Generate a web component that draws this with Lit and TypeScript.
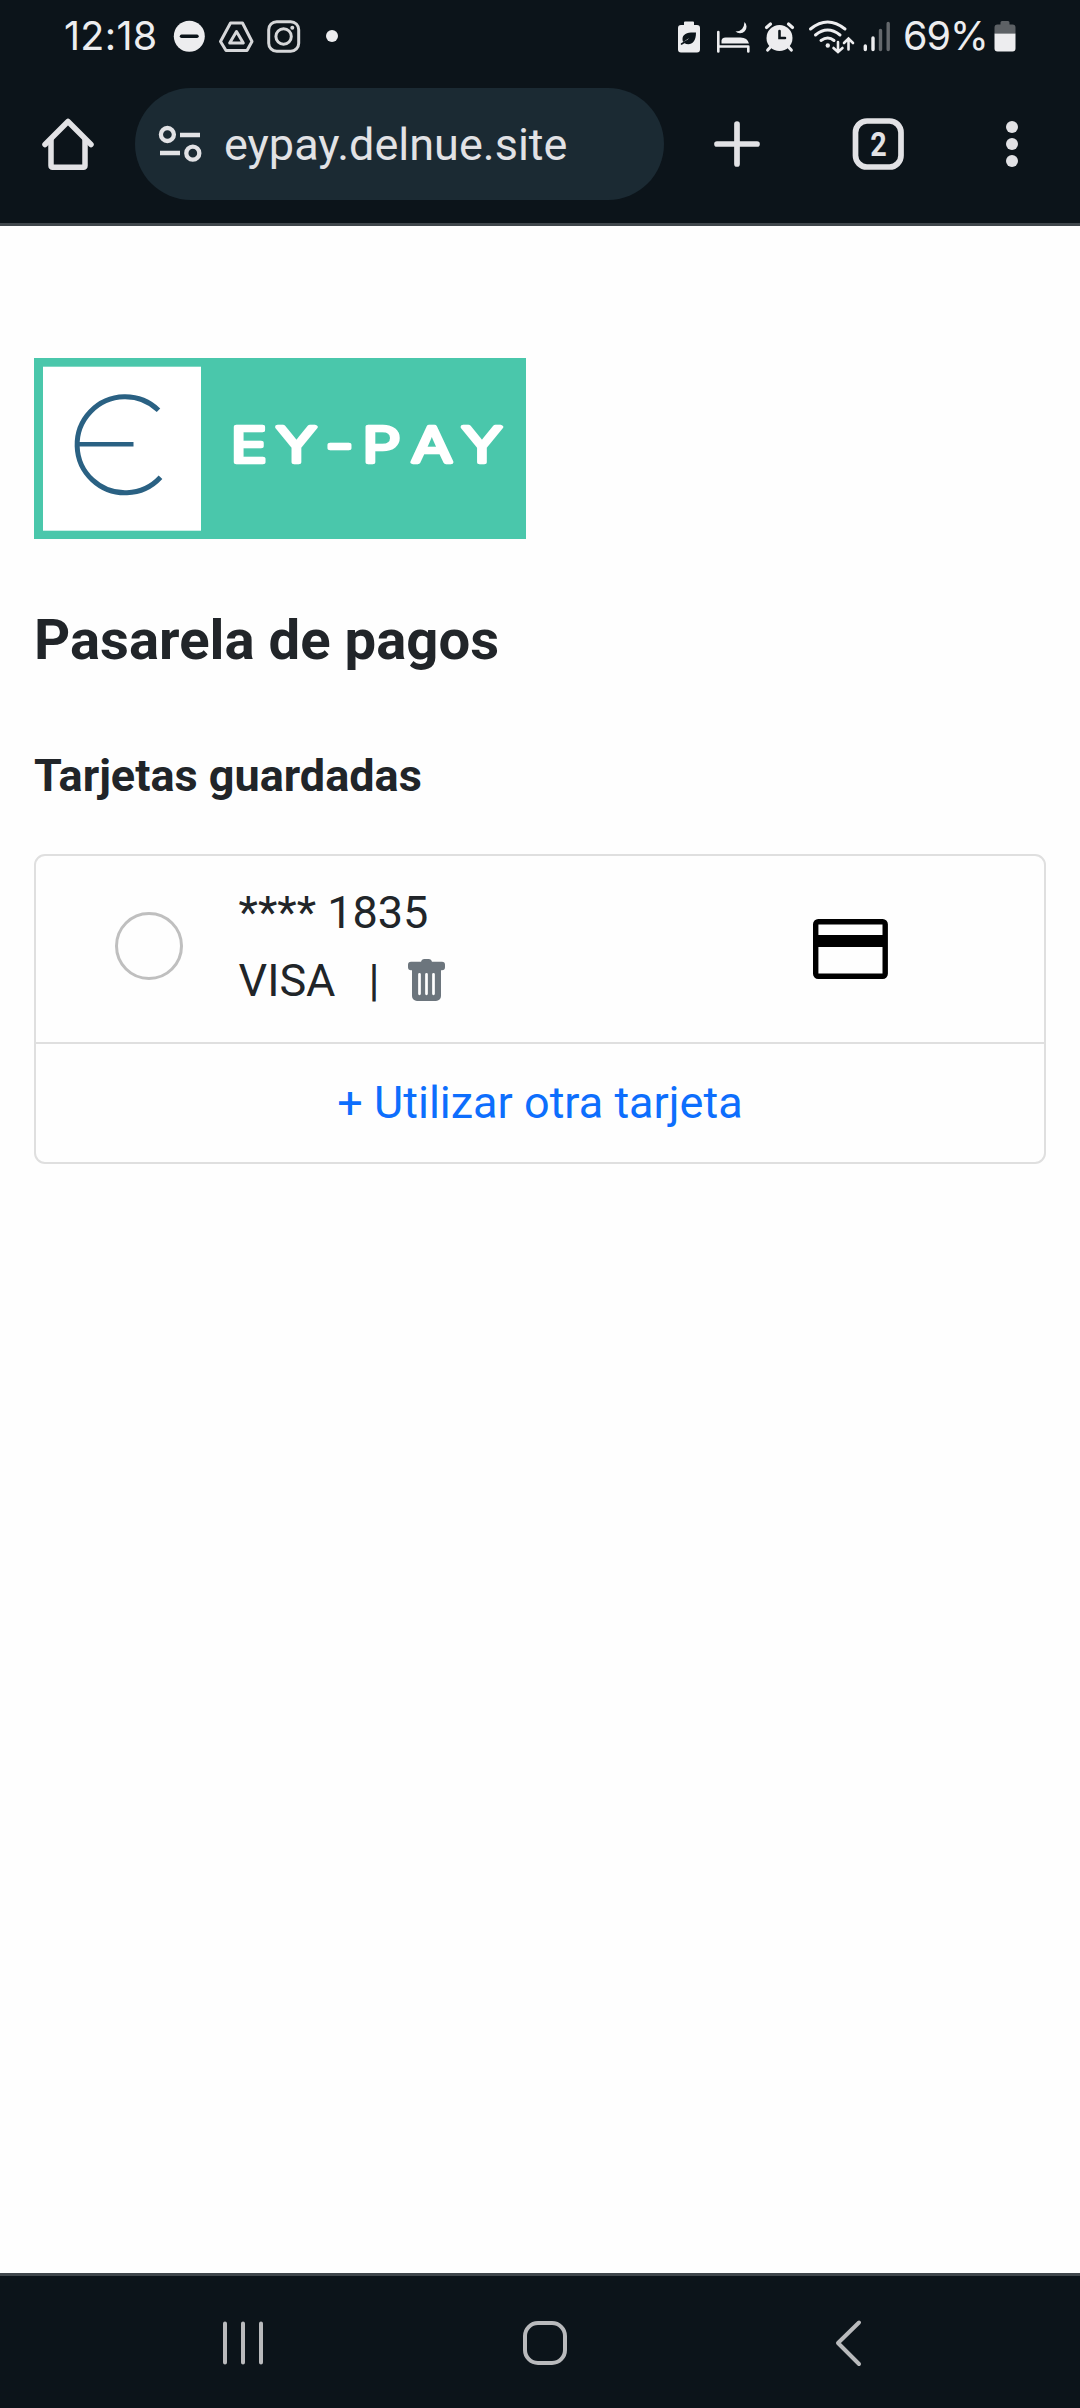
import { LitElement, html, css } from "lit";
import { customElement, property } from "lit/decorators.js";

@customElement("status-bar")
class StatusBar extends LitElement {
  static styles = css`
    :host {
      display: flex;
      justify-content: space-between;
      height: 75px;
      padding: 0 64px 0 64px;
      box-sizing: border-box;
      color: #ededef;
      font: 400 39.5px/72px Inter, "Liberation Sans", sans-serif;
    }
    .group { display: flex; }
    svg { display: block; flex: none; }
    .clock { width: 109px; letter-spacing: 0.3px; white-space: nowrap; }
    .level { width: 91px; margin-left: -2px; letter-spacing: -1px; white-space: nowrap; }
  `;
  render() {
    return html`
      <div class="group">
        <span class="clock">12:18</span>
        <svg width="165" height="75" viewBox="173 0 165 75" fill="none">
          <circle cx="189.3" cy="36.3" r="15.5" fill="#ededef" />
          <path d="M181.5 36.3h15.5" stroke="#0c141a" stroke-width="3.4" stroke-linecap="round" />
          <g stroke="#d6d7d9" stroke-width="3" stroke-linejoin="round">
            <path d="M230.5 23h12l9.500 18.500-5 9h-21l-5.500-9z" />
            <path d="M236.500 31.500l6.800 11.500h-13.600z" />
            <rect x="268.700" y="21.700" width="30" height="29.500" rx="8" />
            <circle cx="283.600" cy="36.500" r="7.700" />
          </g>
          <circle cx="292.300" cy="27.800" r="2" fill="#d6d7d9" />
          <circle cx="332" cy="36" r="6" fill="#ededef" />
        </svg>
      </div>
      <div class="group">
        <svg width="230" height="75" viewBox="675 0 230 75" fill="none" stroke-linecap="round">
          <path d="M685 21.500h8a1 1 0 0 1 1 1v2.500h3a3 3 0 0 1 3 3v21.500a3 3 0 0 1-3 3h-16a3 3 0 0 1-3-3V28a3 3 0 0 1 3-3h3v-2.500a1 1 0 0 1 1-1z" fill="#ededef" />
          <path d="M696 32.500c-8-.5-13.500 1-13.500 6.500 0 2 .7 3 .7 3l6-4-5 5c5 3 11.800 1 11.800-10.500z" fill="#0c141a" />
          <path d="M681.500 44l5-3" stroke="#0c141a" stroke-width="1.500" />
          <g stroke="#ededef" stroke-width="2.600">
            <path d="M718.300 32v19.500M718.300 46.500h30M748.300 46.500v5" />
          </g>
          <path d="M721.500 43.500v-3q.5-3 4-3h15q7 0 8.500 6z" fill="#ededef" />
          <path d="M744.500 22a6.300 6.300 0 1 1-9 9.500q8.500 0 9-9.500z" fill="#ededef" />
          <circle cx="779.500" cy="38" r="13" fill="#ededef" />
          <path d="M766.500 27.500l4-3.500M792.500 27.500l-4-3.500M770.500 47l-2.800 3M788.500 47l2.800 3" stroke="#ededef" stroke-width="3.200" />
          <path d="M779.500 31v7h5.500" stroke="#0c141a" stroke-width="2.600" />
          <g stroke="#ededef" stroke-width="3">
            <path d="M810.500 29q17-14 34.500 0" />
            <path d="M815.500 35q12-10 24.500 0" />
            <path d="M821 40.500q7-5 13 0" />
            <path d="M838 42v9M833.500 48l4.500 4 4.500-4" stroke-width="2.600" />
            <path d="M848.500 49.500V39M844 43l4.500-4.500 4.500 4.500" stroke-width="2.600" />
          </g>
          <circle cx="827.800" cy="45.500" r="2.200" fill="#ededef" />
          <path d="M865.300 46v3.500M873 38v11.500" stroke="#ededef" stroke-width="3.400" />
          <path d="M880.500 30.500v19M888.200 23.500v26" stroke="#64686c" stroke-width="3.400" />
        </svg>
        <span class="level">69%</span>
        <svg width="22" height="75" viewBox="994.500 0 22 75">
          <path d="M995 33.500v-6a3 3 0 0 1 3-3h3v-2a1.500 1.500 0 0 1 1.500-1.500h6a1.500 1.500 0 0 1 1.500 1.500v2h3a3 3 0 0 1 3 3v6z" fill="#5d6165" />
          <path d="M995 33.500h21v15a3 3 0 0 1-3 3h-15a3 3 0 0 1-3-3z" fill="#ededef" />
        </svg>
      </div>
    `;
  }
}

@customElement("browser-bar")
class BrowserBar extends LitElement {
  @property() address = "";
  @property({ type: Number }) tabs = 1;
  static styles = css`
    :host {
      display: flex;
      height: 151px;
      padding-top: 13px;
      box-sizing: border-box;
      border-bottom: 3px solid #40474c;
      color: #e2e2e5;
      font-family: Roboto, sans-serif;
    }
    svg { display: block; flex: none; }
    .pill {
      display: flex;
      width: 529px;
      height: 112px;
      border-radius: 56px;
      background: #1b2a33;
      font-size: 45px;
      line-height: 114px;
      white-space: nowrap;
    }
    .address { padding-left: 19px; }
    .tab-count { font: 700 34px Roboto, sans-serif; }
  `;
  render() {
    return html`
      <svg width="135" height="112" viewBox="0 88 135 112" fill="none" stroke="#e2e2e5" stroke-width="5.500" stroke-linecap="round" stroke-linejoin="round">
        <path d="M45 144.500L68 121.500l23 23" />
        <path d="M51 140v25.500q0 1.700 1.700 1.700h30.600q1.700 0 1.700-1.700V140" />
      </svg>
      <div class="pill">
        <svg width="70" height="112" viewBox="135 88 70 112" fill="none" stroke="#e2e2e5" stroke-width="4.300">
          <circle cx="167.400" cy="134.500" r="6.500" />
          <path d="M180 135h20M160 153h20" />
          <circle cx="192.800" cy="153.200" r="6.500" />
        </svg>
        <span class="address">${this.address}</span>
      </div>
      <svg width="416" height="112" viewBox="664 88 416 112" fill="none" stroke="#e2e2e5" stroke-width="5.700">
        <path d="M717 144h40M737 124v40" stroke-linecap="round" />
        <rect x="855.500" y="121" width="45.500" height="46" rx="11.500" />
        <text class="tab-count" x="878.500" y="156" text-anchor="middle" textLength="16.500" lengthAdjust="spacingAndGlyphs" fill="#e2e2e5" stroke="none">${this.tabs}</text>
        <g fill="#e2e2e5" stroke="none">
          <circle cx="1012" cy="127" r="6" />
          <circle cx="1012" cy="144" r="6" />
          <circle cx="1012" cy="161" r="6" />
        </g>
      </svg>
    `;
  }
}

@customElement("brand-logo")
class BrandLogo extends LitElement {
  static styles = css`
    :host { display: block; height: 181px; }
    svg { display: block; }
    .word {
      font: 300 48.500px Inter, sans-serif;
      fill: #fff;
      stroke: #fff;
      stroke-width: 4.400px;
      stroke-linejoin: round;
    }
  `;
  render() {
    return html`
      <svg width="492" height="181" viewBox="34 358 492 181">
        <rect x="34" y="358" width="492" height="181" fill="#4ac7ab" />
        <rect x="43" y="366.700" width="158" height="164" fill="#fff" />
        <g fill="none" stroke="#2a6183" stroke-width="5">
          <path d="M158.500 410.300A48 48 0 1 0 160.500 477.300" />
          <path d="M78 444.300h55.500" stroke-width="4.500" />
        </g>
        <text class="word" y="462.500" text-anchor="middle" transform="scale(1.25 1)" x="199 237.200 271.600 305.200 345.600 385.600">EY-PAY</text>
      </svg>
    `;
  }
}

@customElement("saved-cards")
class SavedCards extends LitElement {
  @property({ attribute: false }) cards: { digits: string; brand: string }[] = [];
  static styles = css`
    :host {
      display: block;
      height: 310px;
      box-sizing: border-box;
      border: 2px solid #dfdfdf;
      border-radius: 11px;
      color: #212529;
      font: 400 45px/67.5px Roboto, sans-serif;
    }
    .card {
      display: flex;
      height: 188px;
      box-sizing: border-box;
      border-bottom: 2px solid #dfdfdf;
      padding-left: 78.500px;
    }
    .radio {
      width: 68px;
      height: 68px;
      margin-top: 56px;
      box-sizing: border-box;
      border: 3px solid #bfbfbf;
      border-radius: 50%;
    }
    .details { width: 629px; padding: 23px 0 0 56px; white-space: nowrap; box-sizing: border-box; }
    .brand { display: flex; }
    .brand-name { width: 130px; }
    .bar { width: 39px; }
    svg { display: block; flex: none; }
    .trash { margin-top: 12.500px; }
    .card-icon { margin-top: 62px; }
    .other { height: 118px; line-height: 118px; text-align: center; color: #0d6efd; }
  `;
  render() {
    return html`
      ${this.cards.map(
        (c) => html`
          <div class="card">
            <div class="radio"></div>
            <div class="details">
              <div>**** ${c.digits}</div>
              <div class="brand">
                <span class="brand-name">${c.brand}</span>
                <span class="bar">|</span>
                <svg class="trash" width="37" height="42" viewBox="0 0 37 42">
                  <path fill="#6c757d" d="M3 2.700h10Q13.500 0 16 0h5q2.500 0 3 2.700h10a3 3 0 0 1 3 3v2.500a3 3 0 0 1-3 3h-1V37a5 5 0 0 1-5 5H9a5 5 0 0 1-5-5V11.200H3a3 3 0 0 1-3-3V5.700a3 3 0 0 1 3-3z" />
                  <path d="M11.500 15.300v19.500M18.500 15.300v19.500M25.500 15.300v19.500" stroke="#fff" stroke-width="2.700" stroke-linecap="round" />
                </svg>
              </div>
            </div>
            <svg class="card-icon" width="76" height="61" viewBox="0 0 76 61">
              <rect x="3.700" y="3.700" width="69.500" height="54.600" rx="2.500" fill="none" stroke="#000" stroke-width="5.400" />
              <path d="M3.700 17h69.500v12H3.700z" />
            </svg>
          </div>
        `
      )}
      <div class="other">+ Utilizar otra tarjeta</div>
    `;
  }
}

@customElement("nav-bar")
class NavBar extends LitElement {
  static styles = css`
    :host {
      display: flex;
      height: 135px;
      box-sizing: border-box;
      border-top: 3px solid #40474c;
      background: #0c141a;
    }
    svg { display: block; }
  `;
  render() {
    return html`
      <svg width="1080" height="132" viewBox="0 2276 1080 132" fill="none" stroke="#b9babc" stroke-width="4" stroke-linecap="round">
        <path d="M225 2323.500v39M243 2323.500v39M261 2323.500v39" />
        <rect x="525" y="2323" width="40" height="40" rx="13" />
        <path d="M859 2322.500L838 2343l21 21" stroke-linejoin="round" />
      </svg>
    `;
  }
}

@customElement("app-root")
class AppRoot extends LitElement {
  static styles = css`
    :host {
      display: flex;
      flex-direction: column;
      width: 1080px;
      height: 2408px;
      background: #fefefe;
      color: #212529;
      font-family: Roboto, sans-serif;
    }
    .chrome { background: #0c141a; }
    .page { flex: 1; padding: 132px 34px 0; }
    h1 { margin: 68px 0 0; font: 700 56.250px/67.500px Roboto, sans-serif; }
    h2 { margin: 74px 0 51.500px; font: 700 45px/54px Roboto, sans-serif; }
  `;
  private cards = [{ digits: "1835", brand: "VISA" }];
  render() {
    return html`
      <div class="chrome">
        <status-bar></status-bar>
        <browser-bar address="eypay.delnue.site" tabs="2"></browser-bar>
      </div>
      <main class="page">
        <brand-logo></brand-logo>
        <h1>Pasarela de pagos</h1>
        <h2>Tarjetas guardadas</h2>
        <saved-cards .cards=${this.cards}></saved-cards>
      </main>
      <nav-bar></nav-bar>
    `;
  }
}
